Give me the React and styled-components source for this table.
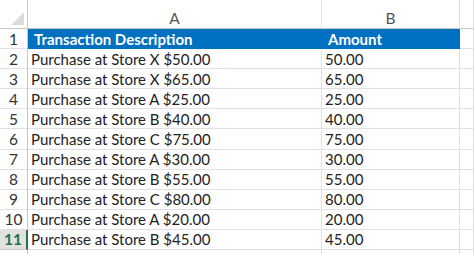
import React from "react";
import styled, { createGlobalStyle, css } from "styled-components";

const Global = createGlobalStyle`
  html, body { margin: 0; padding: 0; background: #ffffff; }
  body { font-family: Lato, "Open Sans", sans-serif; overflow: hidden; }
`;

const Sheet = styled.div`
  display: grid;
  grid-template-columns: 28px 294px 138px 1fr;
  grid-template-rows: 29px repeat(12, 20.1px);
  width: 474px;
  height: 254px;
  overflow: hidden;
`;

const ColHead = styled.div`
  box-sizing: border-box;
  border-right: 1px solid #e1e1e1;
  border-bottom: 1px solid #c6c6c6;
  color: #555;
  font-size: 15.5px;
  display: flex;
  align-items: flex-end;
  justify-content: center;
  padding-bottom: 1px;
  background: #fff;
`;

const Corner = styled.div`
  box-sizing: border-box;
  border-right: 1px solid #c6c6c6;
  border-bottom: 1px solid #c6c6c6;
  position: relative;
  &::after {
    content: "";
    position: absolute;
    right: 3px;
    bottom: 3px;
    width: 0;
    height: 0;
    border-left: 13px solid transparent;
    border-bottom: 13px solid #dcdcdc;
  }
`;

const RowNum = styled.div`
  box-sizing: border-box;
  border-bottom: 1px solid #e1e1e1;
  border-right: 1px solid #c6c6c6;
  color: #333;
  font-size: 15.5px;
  display: flex;
  align-items: center;
  justify-content: center;
  ${(p) =>
    p.$active &&
    css`
      background: #e1e1e1;
      color: #217346;
      font-weight: 700;
      border-right: 2px solid #217346;
      border-bottom-color: #c6c6c6;
    `}
`;

const Cell = styled.div`
  box-sizing: border-box;
  border-right: 1px solid #e1e1e1;
  border-bottom: 1px solid #e1e1e1;
  color: #222;
  font-size: 15px;
  display: flex;
  align-items: center;
  padding-left: 3px;
  white-space: nowrap;
  ${(p) =>
    p.$head &&
    css`
      background: #0070c0;
      color: #fff;
      font-weight: 700;
      padding-left: 6px;
      border-right-color: #0070c0;
      border-bottom-color: #0070c0;
    `}
`;

const rows = [
  ["Purchase at Store X $50.00", "50.00"],
  ["Purchase at Store X $65.00", "65.00"],
  ["Purchase at Store A $25.00", "25.00"],
  ["Purchase at Store B $40.00", "40.00"],
  ["Purchase at Store C $75.00", "75.00"],
  ["Purchase at Store A $30.00", "30.00"],
  ["Purchase at Store B $55.00", "55.00"],
  ["Purchase at Store C $80.00", "80.00"],
  ["Purchase at Store A $20.00", "20.00"],
  ["Purchase at Store B $45.00", "45.00"],
];

export default function App() {
  return (
    <>
      <Global />
      <Sheet>
        <Corner />
        <ColHead>A</ColHead>
        <ColHead>B</ColHead>
        <ColHead />
        <RowNum>1</RowNum>
        <Cell $head>Transaction Description</Cell>
        <Cell $head>Amount</Cell>
        <Cell />
        {rows.map((r, i) => (
          <React.Fragment key={i}>
            <RowNum $active={i === 9}>{i + 2}</RowNum>
            <Cell>{r[0]}</Cell>
            <Cell>{r[1]}</Cell>
            <Cell />
          </React.Fragment>
        ))}
        <RowNum />
        <Cell />
        <Cell />
        <Cell />
      </Sheet>
    </>
  );
}
